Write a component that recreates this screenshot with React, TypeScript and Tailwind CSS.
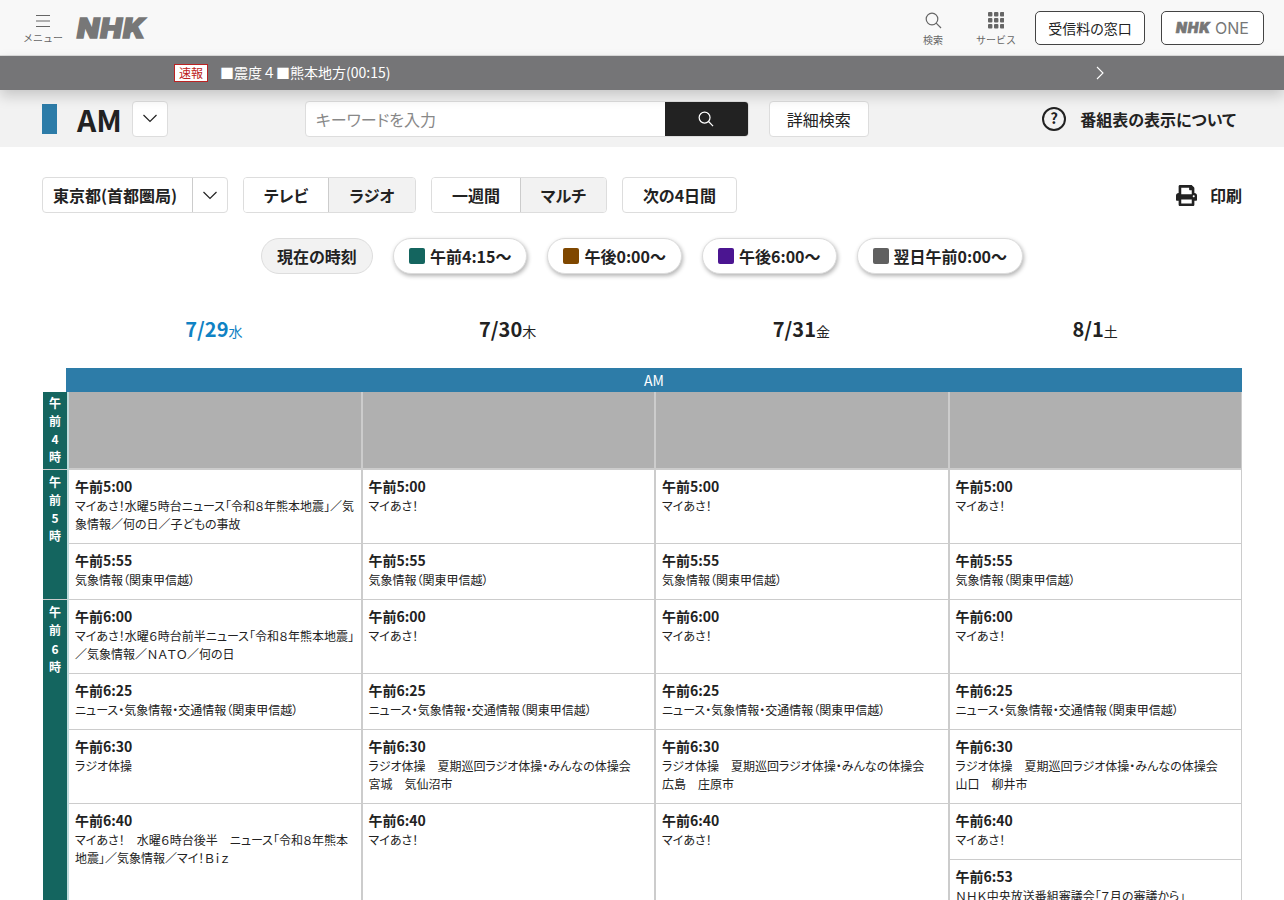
import React from "react";
import { FaPrint } from "react-icons/fa";

const font = { fontFamily: '"Noto Sans CJK JP", "Noto Sans", sans-serif' };

const Chevron = ({ className = "" }: { className?: string }) => (
  <svg width="16" height="9" viewBox="0 0 16 9" fill="none" stroke="#222" strokeWidth="1.2" className={className}>
    <path d="M1.5 1 L8 7.5 L14.5 1" />
  </svg>
);

type P = { t: string; d: string; h: string };

const c56 = { t: "午前5:55", d: "気象情報（関東甲信越）", h: "h-[56px]" };
const c625 = { t: "午前6:25", d: "ニュース・気象情報・交通情報（関東甲信越）", h: "h-[56px]" };

const mk = (d1: string, d630: string, last: P[]): P[] => [
  { t: "午前5:00", d: d1 === "first" ? "マイあさ！水曜５時台ニュース「令和８年熊本地震」／気象情報／何の日／子どもの事故" : "マイあさ！", h: "h-[74px]" },
  c56,
  { t: "午前6:00", d: d1 === "first" ? "マイあさ！水曜６時台前半ニュース「令和８年熊本地震」／気象情報／ＮＡＴＯ／何の日" : "マイあさ！", h: "h-[74px]" },
  c625,
  { t: "午前6:30", d: d630, h: "h-[74px]" },
  ...last,
];

const tall = (d: string): P[] => [{ t: "午前6:40", d, h: "h-[200px]" }];
const aso = (s: string) => `ラジオ体操　夏期巡回ラジオ体操・みんなの体操会\n${s}`;

const cols: P[][] = [
  mk("first", "ラジオ体操", tall("マイあさ！　水曜６時台後半　ニュース「令和８年熊本地震」／気象情報／マイ！Ｂｉｚ")),
  mk("", aso("宮城　気仙沼市"), tall("マイあさ！")),
  mk("", aso("広島　庄原市"), tall("マイあさ！")),
  mk("", aso("山口　柳井市"), [
    { t: "午前6:40", d: "マイあさ！", h: "h-[56px]" },
    { t: "午前6:53", d: "ＮＨＫ中央放送番組審議会「７月の審議から」", h: "h-[74px]" },
  ]),
];

const Pill = ({ color, label }: { color: string; label: string }) => (
  <div className="flex h-[36px] items-center gap-[5px] rounded-[18px] border border-[#dcdcdc] bg-white px-[15px] text-[16px] font-bold text-[#222] shadow-[1px_2px_4px_rgba(0,0,0,0.3)]">
    <span className="h-[16px] w-[16px] rounded-[2px]" style={{ backgroundColor: color }} />
    {label}
  </div>
);

const Hour = ({ ch, h }: { ch: string[]; h: string }) => (
  <div className={`${h} flex flex-col items-center border-b border-[#ccc] bg-[#14655f] text-[12px] font-bold leading-[18.3px] text-white`}>
    {ch.map((c, i) => (
      <span key={i}>{c}</span>
    ))}
  </div>
);

export default function App() {
  return (
    <div className="h-[900px] overflow-hidden bg-white text-[#222] [font-feature-settings:'palt']" style={font}>
      <header className="flex h-[56px] items-center border-b border-[#ddd] bg-[#f8f8f8] pl-[24px] pr-[20px]">
        <div className="flex w-[38px] flex-col items-center text-[#666] [font-feature-settings:normal]">
          <svg width="14" height="14" viewBox="0 0 14 14" stroke="#666" strokeWidth="1.2" className="mt-[3px]">
            <path d="M0 1.5H14M0 7H14M0 12.5H14" />
          </svg>
          <span className="mt-[3px] whitespace-nowrap text-[10px] leading-[14px]">メニュー</span>
        </div>
        <span className="ml-[15px] mt-[1px] origin-left scale-x-[1.07] text-[27px] font-black italic leading-none tracking-[1px] text-[#777]" style={{ fontFamily: "Inter, sans-serif", WebkitTextStroke: "1.4px #777" }}>
          NHK
        </span>
        <div className="ml-auto flex items-center">
          <div className="flex w-[40px] flex-col items-center pt-[4px] text-[#666] [font-feature-settings:normal]">
            <svg width="17" height="17" viewBox="0 0 17 17" fill="none" stroke="#666" strokeWidth="1.2">
              <circle cx="7" cy="7" r="5.8" />
              <path d="M11.2 11.2L16 16" />
            </svg>
            <span className="mt-[4px] text-[10px] leading-[14px]">検索</span>
          </div>
          <div className="ml-[23px] flex w-[40px] flex-col items-center pt-[4px] text-[#666] [font-feature-settings:normal]">
            <svg width="16" height="17" viewBox="0 0 16 17" fill="#666">
              {[0, 6, 12].flatMap((y) =>
                [0, 6, 12].map((x) => <rect key={`${x}-${y}`} x={x} y={y} width="4.4" height="4.4" rx="1" />)
              )}
            </svg>
            <span className="mt-[4px] whitespace-nowrap text-[10px] leading-[14px]">サービス</span>
          </div>
          <div className="ml-[19px] flex h-[34px] w-[110px] items-center justify-center rounded-[5px] border border-[#444] bg-white pt-[1px] text-[14px]">
            受信料の窓口
          </div>
          <div className="ml-[16px] flex h-[34px] w-[103px] items-center justify-center gap-[4px] rounded-[5px] border border-[#444] bg-white pt-[1px] text-[#777]">
            <span className="text-[14px] font-black italic leading-none tracking-[1px]" style={{ fontFamily: "Inter, sans-serif", WebkitTextStroke: "0.7px #777" }}>
              NHK
            </span>
            <span className="text-[16px] leading-none" style={{ fontFamily: "Inter, sans-serif" }}>ONE</span>
          </div>
        </div>
      </header>

      <div className="relative z-10 flex h-[34px] items-center bg-[#757577] pl-[174px] pr-[180px] text-[14px] text-white shadow-[0_6px_14px_rgba(0,0,0,0.18)]">
        <span className="mt-[-1px] flex h-[18px] w-[34px] items-center justify-center border border-[#b22] bg-white text-[12px] leading-none text-[#b22]">
          速報
        </span>
        <span className="ml-[12px] mt-[-2px] [font-feature-settings:normal]">■震度４■熊本地方(00:15)</span>
        <svg width="8" height="14" viewBox="0 0 8 14" fill="none" stroke="#fff" strokeWidth="1.1" className="ml-auto">
          <path d="M1 1L7 7L1 13" />
        </svg>
      </div>

      <div className="flex h-[57px] items-center bg-[#f2f2f2] pl-[42px] pr-[48px]">
        <span className="h-[30px] w-[15px] bg-[#2d7ca8]" />
        <span className="ml-[20px] text-[30px] font-bold leading-none">AM</span>
        <div className="ml-[10px] flex h-[36px] w-[36px] items-center justify-center rounded-[4px] border border-[#ddd] bg-white">
          <Chevron />
        </div>
        <div className="ml-[137px] flex h-[36px] w-[444px] overflow-hidden rounded-[4px] border border-[#ddd] bg-white">
          <span className="flex-1 pl-[10px] text-[16px] leading-[34px] text-[#888]">キーワードを入力</span>
          <div className="flex w-[83px] items-center justify-center bg-[#222]">
            <svg width="16" height="16" viewBox="0 0 17 17" fill="none" stroke="#fff" strokeWidth="1.3">
              <circle cx="7" cy="7" r="5.8" />
              <path d="M11.2 11.2L16 16" />
            </svg>
          </div>
        </div>
        <div className="ml-[20px] flex h-[36px] w-[100px] items-center justify-center rounded-[4px] border border-[#ddd] bg-white text-[16px]">
          詳細検索
        </div>
        <div className="ml-auto flex items-center text-[16px] font-bold">
          <svg width="24" height="24" viewBox="0 0 24 24" fill="none" stroke="#222" strokeWidth="2">
            <circle cx="12" cy="12" r="11" />
            <text x="12" y="17" textAnchor="middle" fontSize="15" fontWeight="700" fill="#222" stroke="none" style={font}>?</text>
          </svg>
          <span className="ml-[14px]">番組表の表示について</span>
        </div>
      </div>

      <div className="mt-[30px] flex h-[36px] items-center pl-[42px] pr-[42px] text-[16px] font-bold">
        <div className="flex h-[36px] w-[186px] rounded-[4px] border border-[#ddd] bg-white">
          <span className="flex flex-1 items-center border-r border-[#ccc] pl-[10px]">東京都(首都圏局)</span>
          <span className="flex w-[34px] items-center justify-center">
            <Chevron />
          </span>
        </div>
        <div className="ml-[15px] flex h-[36px] w-[173px] overflow-hidden rounded-[4px] border border-[#ddd]">
          <span className="flex w-[85px] items-center justify-center border-r border-[#ccc] bg-white">テレビ</span>
          <span className="flex flex-1 items-center justify-center bg-[#f2f2f2]">ラジオ</span>
        </div>
        <div className="ml-[15px] flex h-[36px] w-[176px] overflow-hidden rounded-[4px] border border-[#ddd]">
          <span className="flex w-[89px] items-center justify-center border-r border-[#ccc] bg-white">一週間</span>
          <span className="flex flex-1 items-center justify-center bg-[#f2f2f2]">マルチ</span>
        </div>
        <div className="ml-[15px] flex h-[36px] w-[115px] items-center justify-center rounded-[4px] border border-[#ddd] bg-white">
          次の4日間
        </div>
        <div className="ml-auto flex items-center">
          <FaPrint size={21} color="#222" />
          <span className="ml-[13px]">印刷</span>
        </div>
      </div>

      <div className="mt-[25px] flex justify-center gap-[20px] text-[16px] font-bold">
        <div className="flex h-[36px] w-[112px] items-center justify-center rounded-[18px] border border-[#ddd] bg-[#f2f2f2]">現在の時刻</div>
        <Pill color="#14655f" label="午前4:15～" />
        <Pill color="#7f4700" label="午後0:00～" />
        <Pill color="#4b1591" label="午後6:00～" />
        <Pill color="#606060" label="翌日午前0:00～" />
      </div>

      <div className="ml-[67px] mr-[42px] mt-[39px] grid grid-cols-4 text-center">
        {[
          ["7/29", "水", "text-[#0f82c4]"],
          ["7/30", "木", ""],
          ["7/31", "金", ""],
          ["8/1", "土", ""],
        ].map(([d, w, c]) => (
          <div key={d} className={`${c} h-[32px] leading-[32px]`}>
            <span className="text-[20px] font-bold">{d}</span>
            <span className="text-[14px]">{w}</span>
          </div>
        ))}
      </div>

      <div className="ml-[66px] mr-[42px] mt-[23px] h-[24px] bg-[#2d7ca8] text-center text-[14px] leading-[24px] text-white">AM</div>

      <div className="ml-[43px] mr-[42px] flex">
        <div className="w-[24px] shrink-0 bg-[#14655f]">
          <Hour ch={["午", "前", "4", "時"]} h="h-[78px] pt-[1.5px]" />
          <Hour ch={["午", "前", "5", "時"]} h="h-[130px] pt-[2.5px]" />
          <Hour ch={["午", "前", "6", "時"]} h="h-[400px] pt-[3px]" />
        </div>
        <div className="grid flex-1 grid-cols-[293.5px_293.5px_293.5px_1fr]">
          {cols.map((ps, i) => (
            <div key={i} className={`min-w-0 border-l-2 ${i === 0 ? "border-[#c0dcdc]" : "border-[#ccc]"} ${i === 3 ? "border-r" : ""}`}>
              <div className="h-[78px] border-b-2 border-[#ccc] bg-[#b0b0b0]" />
              {ps.map((p, j) => (
                <div key={j} className={`${p.h} border-b border-[#ccc] bg-white pl-[6px] pr-[4px] pt-[6px]`}>
                  <div className="text-[14px] font-bold leading-[20px]">{p.t}</div>
                  <div className="mt-[0.5px] whitespace-pre-line text-[12px] leading-[18px] text-[#222]">{p.d}</div>
                </div>
              ))}
            </div>
          ))}
        </div>
      </div>
    </div>
  );
}
